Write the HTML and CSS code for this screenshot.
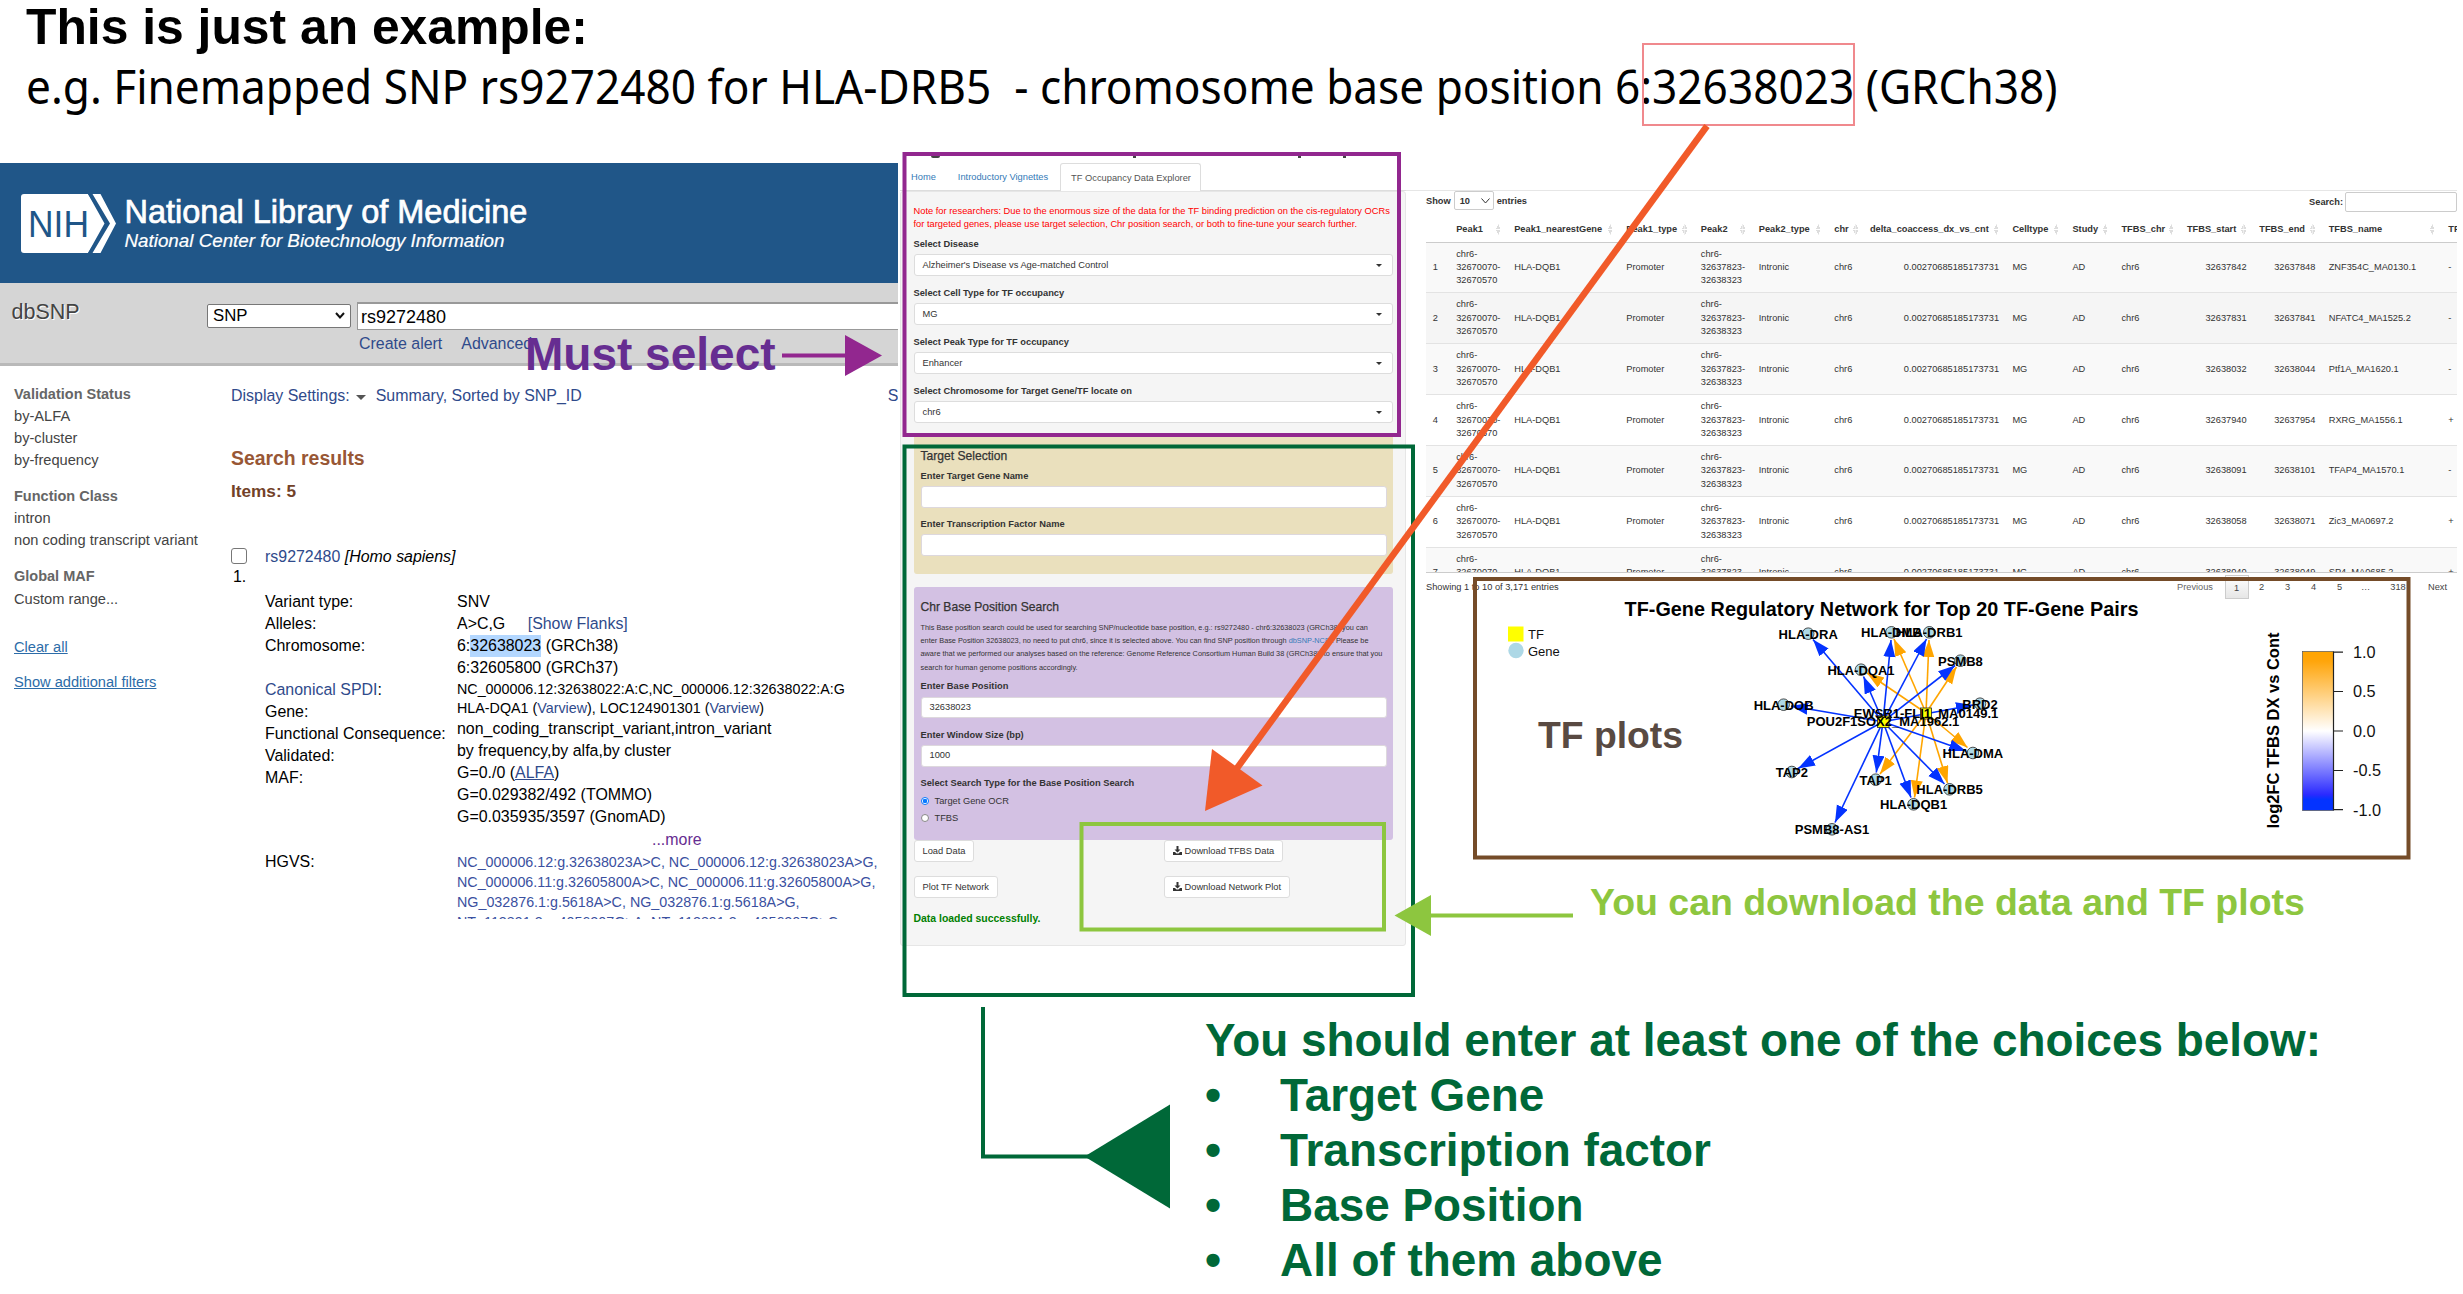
FILE: index.html
```html
<!DOCTYPE html>
<html lang="en">
<head>
<meta charset="utf-8">
<title>SNP base position search example</title>
<link rel="stylesheet" href="styles.css">
</head>
<body>
<div class="poster">
  <header class="intro">
    <h1>This is just an example:</h1>
    <p><span class="intro-text">e.g. Finemapped SNP rs9272480 for HLA-DRB5&nbsp; - chromosome base position 6:32638023 (GRCh38)</span></p>
  </header>

  <main class="panels">
    <section class="dbsnp">
      <div class="nlm">
        <svg class="nih" width="95" height="59" viewBox="0 0 95 59">
          <path d="M3 0H67L86 29.500 67 59H3Q0 59 0 56V3Q0 0 3 0Z" fill="#fff"/>
          <path d="M70 0H79.500L95 29.500 79.500 59H70L87 29.500Z" fill="#fff"/>
          <path d="M67 0H71.500L89 29.500 71.500 59H67L83.500 29.500Z" fill="#205688"/>
          <text x="7" y="43" font-size="37" textLength="61" lengthAdjust="spacingAndGlyphs" fill="#205688">NIH</text>
        </svg>
        <div class="nlm-names">
          <div class="nlm-title">National Library of Medicine</div>
          <div class="nlm-sub">National Center for Biotechnology Information</div>
        </div>
      </div>
      <div class="searchbar">
        <div class="db">dbSNP</div>
        <div class="fields">
          <div class="field-row">
            <div class="db-select">SNP<svg width="10" height="7" viewBox="0 0 10 7"><path d="M1 1L5 5.500 9 1" fill="none" stroke="#111" stroke-width="2"/></svg></div>
            <div class="term">rs9272480</div>
          </div>
          <div class="field-links"><a>Create alert</a><a>Advanced</a></div>
        </div>
      </div>
      <div class="dbsnp-body">
        <aside class="filters">
          <h3>Validation Status</h3>
          <div>by-ALFA</div><div>by-cluster</div><div>by-frequency</div>
          <h3>Function Class</h3>
          <div>intron</div><div>non coding transcript variant</div>
          <h3>Global MAF</h3>
          <div>Custom range...</div>
          <div class="flink first"><a>Clear all</a></div>
          <div class="flink"><a>Show additional filters</a></div>
        </aside>
        <div class="results">
          <div class="display"><span>Display Settings:</span><i class="tri"></i><span>Summary, Sorted by SNP_ID</span><span class="send">Send to:</span></div>
          <h2>Search results</h2>
          <h4>Items: 5</h4>
          <div class="record">
            <div class="pick"><i class="box"></i><span>1.</span></div>
            <div class="rec-body">
              <div class="rec-title"><a>rs9272480</a> <em>[Homo sapiens]</em></div>
              <div class="cols">
                <div class="labels">
                  <div>Variant type:</div><div>Alleles:</div><div>Chromosome:</div><div>&nbsp;</div>
                  <div><a>Canonical SPDI</a>:</div><div>Gene:</div><div>Functional Consequence:</div><div>Validated:</div><div>MAF:</div>
                  <div class="hgvs-label">HGVS:</div>
                </div>
                <div class="values">
                  <div>SNV</div>
                  <div>A&gt;C,G <a class="flanks">[Show Flanks]</a></div>
                  <div>6:<mark>32638023</mark> (GRCh38)</div>
                  <div>6:32605800 (GRCh37)</div>
                  <div class="sm">NC_000006.12:32638022:A:C,NC_000006.12:32638022:A:G</div>
                  <div class="sm gene">HLA-DQA1 (<a>Varview</a>), LOC124901301 (<a>Varview</a>)</div>
                  <div>non_coding_transcript_variant,intron_variant</div>
                  <div>by frequency,by alfa,by cluster</div>
                  <div>G=0./0 (<a class="u">ALFA</a>)</div>
                  <div>G=0.029382/492 (TOMMO)</div>
                  <div>G=0.035935/3597 (GnomAD)</div>
                  <div class="more">...more</div>
                  <div class="sm link">NC_000006.12:g.32638023A&gt;C, NC_000006.12:g.32638023A&gt;G,</div>
                  <div class="sm link">NC_000006.11:g.32605800A&gt;C, NC_000006.11:g.32605800A&gt;G,</div>
                  <div class="sm link">NG_032876.1:g.5618A&gt;C, NG_032876.1:g.5618A&gt;G,</div>
                  <div class="sm link">NT_113891.3:g.4056207G&gt;A, NT_113891.3:g.4056207G&gt;C,</div>
                </div>
              </div>
            </div>
          </div>
        </div>
      </div>
    </section>

    <section class="explorer">
      <div class="crop-edge"><i></i><i></i><i></i><i></i></div>
      <nav class="tabs"><a>Home</a><a>Introductory Vignettes</a><span>TF Occupancy Data Explorer</span></nav>
      <div class="well">
        <p class="note">Note for researchers: Due to the enormous size of the data for the TF binding prediction on the cis-regulatory OCRs<br>for targeted genes, please use target selection, Chr position search, or both to fine-tune your search further.</p>
        <label>Select Disease</label><div class="select">Alzheimer's Disease vs Age-matched Control</div>
        <label>Select Cell Type for TF occupancy</label><div class="select">MG</div>
        <label>Select Peak Type for TF occupancy</label><div class="select">Enhancer</div>
        <label>Select Chromosome for Target Gene/TF locate on</label><div class="select">chr6</div>
        <div class="target">
          <h5>Target Selection</h5>
          <label>Enter Target Gene Name</label><div class="input"></div>
          <label>Enter Transcription Factor Name</label><div class="input"></div>
        </div>
        <div class="position">
          <h5>Chr Base Position Search</h5>
          <p>This Base position search could be used for searching SNP/nucleotide base position, e.g.: rs9272480 - chr6:32638023 (GRCh38) you can<br>enter Base Position 32638023, no need to put chr6, since it is selected above. You can find SNP position through <a>dbSNP-NCBI</a>. Please be<br>aware that we performed our analyses based on the reference: Genome Reference Consortium Human Build 38 (GRCh38), to ensure that you<br>search for human genome positions accordingly.</p>
          <label>Enter Base Position</label><div class="input">32638023</div>
          <label>Enter Window Size (bp)</label><div class="input">1000</div>
          <label>Select Search Type for the Base Position Search</label>
          <div class="radios">
            <div class="radio"><i class="on"></i>Target Gene OCR</div>
            <div class="radio"><i></i>TFBS</div>
          </div>
        </div>
        <div class="buttons">
          <div><span class="btn">Load Data</span></div>
          <div><span class="btn"><svg width="9" height="9" viewBox="0 0 18 18"><path d="M7 0h4v7h4l-6 6-6-6h4z M0 12h4l3 3h4l3-3h4v6H0z"/></svg>Download TFBS Data</span></div>
          <div><span class="btn">Plot TF Network</span></div>
          <div><span class="btn"><svg width="9" height="9" viewBox="0 0 18 18"><path d="M7 0h4v7h4l-6 6-6-6h4z M0 12h4l3 3h4l3-3h4v6H0z"/></svg>Download Network Plot</span></div>
        </div>
        <div class="done">Data loaded successfully.</div>
      </div>
    </section>

    <section class="output">
      <div class="table-top">
        <div class="show">Show <span class="len">10<svg width="9" height="6" viewBox="0 0 9 6"><path d="M.5 .5L4.500 5 8.500 .5" fill="none" stroke="#333"/></svg></span> entries</div>
        <div class="find">Search:<span></span></div>
      </div>
      <div class="scroll">
        <table>
          <colgroup><col style="width:23.5px"><col style="width:58px"><col style="width:112px"><col style="width:74.500px"><col style="width:58px"><col style="width:75.500px"><col style="width:37.500px"><col style="width:140.500px"><col style="width:60px"><col style="width:49px"><col style="width:66px"><col style="width:72.500px"><col style="width:68.700px"><col style="width:119.600px"><col style="width:15.200px"></colgroup>
          <thead><tr><th class="n"></th><th>Peak1</th><th>Peak1_nearestGene</th><th>Peak1_type</th><th>Peak2</th><th>Peak2_type</th><th>chr</th><th class="r">delta_coaccess_dx_vs_cnt</th><th>Celltype</th><th>Study</th><th>TFBS_chr</th><th class="r">TFBS_start</th><th class="r">TFBS_end</th><th>TFBS_name</th><th class="cut">TFBS_strand</th></tr></thead>
          <tbody>
            <tr class="odd"><td>1</td><td>chr6-<br>32670070-<br>32670570</td><td>HLA-DQB1</td><td>Promoter</td><td>chr6-<br>32637823-<br>32638323</td><td>Intronic</td><td>chr6</td><td class="r">0.00270685185173731</td><td>MG</td><td>AD</td><td>chr6</td><td class="r">32637842</td><td class="r">32637848</td><td>ZNF354C_MA0130.1</td><td>-</td></tr>
            <tr class="hover"><td>2</td><td>chr6-<br>32670070-<br>32670570</td><td>HLA-DQB1</td><td>Promoter</td><td>chr6-<br>32637823-<br>32638323</td><td>Intronic</td><td>chr6</td><td class="r">0.00270685185173731</td><td>MG</td><td>AD</td><td>chr6</td><td class="r">32637831</td><td class="r">32637841</td><td>NFATC4_MA1525.2</td><td>-</td></tr>
            <tr class="odd"><td>3</td><td>chr6-<br>32670070-<br>32670570</td><td>HLA-DQB1</td><td>Promoter</td><td>chr6-<br>32637823-<br>32638323</td><td>Intronic</td><td>chr6</td><td class="r">0.00270685185173731</td><td>MG</td><td>AD</td><td>chr6</td><td class="r">32638032</td><td class="r">32638044</td><td>Ptf1A_MA1620.1</td><td>-</td></tr>
            <tr><td>4</td><td>chr6-<br>32670070-<br>32670570</td><td>HLA-DQB1</td><td>Promoter</td><td>chr6-<br>32637823-<br>32638323</td><td>Intronic</td><td>chr6</td><td class="r">0.00270685185173731</td><td>MG</td><td>AD</td><td>chr6</td><td class="r">32637940</td><td class="r">32637954</td><td>RXRG_MA1556.1</td><td>+</td></tr>
            <tr class="odd"><td>5</td><td>chr6-<br>32670070-<br>32670570</td><td>HLA-DQB1</td><td>Promoter</td><td>chr6-<br>32637823-<br>32638323</td><td>Intronic</td><td>chr6</td><td class="r">0.00270685185173731</td><td>MG</td><td>AD</td><td>chr6</td><td class="r">32638091</td><td class="r">32638101</td><td>TFAP4_MA1570.1</td><td>-</td></tr>
            <tr><td>6</td><td>chr6-<br>32670070-<br>32670570</td><td>HLA-DQB1</td><td>Promoter</td><td>chr6-<br>32637823-<br>32638323</td><td>Intronic</td><td>chr6</td><td class="r">0.00270685185173731</td><td>MG</td><td>AD</td><td>chr6</td><td class="r">32638058</td><td class="r">32638071</td><td>Zic3_MA0697.2</td><td>+</td></tr>
            <tr class="odd"><td>7</td><td>chr6-<br>32670070-<br>32670570</td><td>HLA-DQB1</td><td>Promoter</td><td>chr6-<br>32637823-<br>32638323</td><td>Intronic</td><td>chr6</td><td class="r">0.00270685185173731</td><td>MG</td><td>AD</td><td>chr6</td><td class="r">32638040</td><td class="r">32638049</td><td>SP4_MA0685.2</td><td>+</td></tr>
          </tbody>
        </table>
      </div>
      <div class="table-foot">
        <div class="info">Showing 1 to 10 of 3,171 entries</div>
        <div class="pages"><span class="prev">Previous</span><b>1</b><span>2</span><span>3</span><span>4</span><span>5</span><span>…</span><span class="last">318</span><span class="next">Next</span></div>
      </div>
      <svg class="plot" width="980" height="260" viewBox="1473 600 980 260">
        <defs>
          <marker id="hb" markerUnits="userSpaceOnUse" markerWidth="18" markerHeight="14" refX="17" refY="6" orient="auto"><path d="M0 0L17 6 0 12Z" fill="#0433ff"/></marker>
          <marker id="ho" markerUnits="userSpaceOnUse" markerWidth="18" markerHeight="14" refX="17" refY="6" orient="auto"><path d="M0 0L17 6 0 12Z" fill="#ffa500"/></marker>
          <linearGradient id="fc" x1="0" y1="0" x2="0" y2="1"><stop offset="0" stop-color="#ffa500"/><stop offset=".06" stop-color="#ffa50a"/><stop offset=".5" stop-color="#fff"/><stop offset=".9" stop-color="#2a2aff"/><stop offset=".93" stop-color="#0433ff"/><stop offset="1" stop-color="#0433ff"/></linearGradient>
        </defs>
        <text class="ptitle" x="1624.500" y="616" textLength="514">TF-Gene Regulatory Network for Top 20 TF-Gene Pairs</text>
        <rect x="1508" y="626.500" width="15.500" height="15" fill="#ff0"/>
        <circle cx="1516" cy="650.500" r="7.700" fill="#add8e6"/>
        <text class="leg" x="1528" y="639">TF</text><text class="leg" x="1528" y="655.500">Gene</text>
        <g class="orange">
          <path d="M1926 713L1894 639"/><path d="M1926 713L1929 640"/><path d="M1926 713L1867 673"/><path d="M1926 713L1956.500 667"/>
          <path d="M1926 713L1967.500 747.500"/><path d="M1926 713L1947.500 783"/><path d="M1926 713L1914.500 797.500"/><path d="M1926 713L1880 774"/>
        </g>
        <g class="blue">
          <path d="M1883 721.700L1813 639.500"/><path d="M1883 721.700L1891 640"/><path d="M1883 721.700L1926.500 639"/><path d="M1883 721.700L1863.500 676.500"/>
          <path d="M1883 721.700L1955 665.500"/><path d="M1883 721.700L1791 706"/><path d="M1883 721.700L1973 705"/><path d="M1883 721.700L1966 751"/>
          <path d="M1883 721.700L1944.500 784"/><path d="M1883 721.700L1911 797.500"/><path d="M1883 721.700L1876.300 772.500"/><path d="M1883 721.700L1798 768.500"/><path d="M1883 721.700L1835 822.500"/>
        </g>
        <g class="nodes">
          <circle cx="1808.200" cy="633.700" r="5.800"/><circle cx="1891.400" cy="632.300" r="5.800"/><circle cx="1929.300" cy="632.300" r="5.800"/><circle cx="1861" cy="669.700" r="5.800"/><circle cx="1960.400" cy="660.700" r="5.800"/><circle cx="1783.600" cy="704.700" r="5.800"/><circle cx="1980" cy="703.700" r="5.800"/><circle cx="1791.800" cy="772" r="5.800"/><circle cx="1875.700" cy="779.700" r="5.800"/><circle cx="1972.900" cy="753" r="5.800"/><circle cx="1949.600" cy="789.300" r="5.800"/><circle cx="1913.600" cy="804.300" r="5.800"/><circle cx="1832" cy="829.300" r="5.800"/>
        </g>
        <rect class="tf" x="1920.500" y="708" width="11" height="11"/><rect class="tf" x="1877.500" y="716" width="11.500" height="11.500"/>
        <g class="names">
          <text x="1808.200" y="638.700">HLA-DRA</text><text x="1891.400" y="637">HLA-DMB</text><text x="1929.300" y="637">HLA-DRB1</text><text x="1861" y="674.500">HLA-DQA1</text><text x="1960.400" y="665.700">PSMB8</text><text x="1783.600" y="709.500">HLA-DOB</text><text x="1980" y="708.500">BRD2</text><text x="1926" y="718.300">EWSR1-FLI1_MA0149.1</text><text x="1883" y="726">POU2F1SOX2_MA1962.1</text><text x="1791.800" y="777">TAP2</text><text x="1875.700" y="784.700">TAP1</text><text x="1972.900" y="758">HLA-DMA</text><text x="1949.600" y="794">HLA-DRB5</text><text x="1913.600" y="809.300">HLA-DQB1</text><text x="1832" y="834.300">PSMB8-AS1</text>
        </g>
        <rect x="2302.500" y="651.500" width="31" height="159" fill="url(#fc)" stroke="#555" stroke-width=".7"/>
        <path d="M2333.500 651.500V810.500M2333.500 652.200H2343M2333.500 691.500H2343M2333.500 731H2343M2333.500 770.500H2343M2333.500 809.700H2343" stroke="#222" stroke-width="1.200"/>
        <g class="ticks"><text x="2353" y="658">1.0</text><text x="2353" y="697.300">0.5</text><text x="2353" y="736.800">0.0</text><text x="2353" y="776.300">-0.5</text><text x="2353" y="815.700">-1.0</text></g>
        <text class="axis" transform="translate(2279 828.500) rotate(-90)" textLength="196">log2FC TFBS DX vs Cont</text>
      </svg>
    </section>
  </main>

  <div class="tag must">Must select</div>
  <div class="tag plots">TF plots</div>
  <div class="tag download">You can download the data and TF plots</div>
  <div class="choices">
    <p>You should enter at least one of the choices below:</p>
    <ul><li>Target Gene</li><li>Transcription factor</li><li>Base Position</li><li>All of them above</li></ul>
  </div>
  <svg class="marks" width="2463" height="1294" viewBox="0 0 2463 1294">
    <g fill="none">
      <rect x="1643" y="44" width="211" height="81" stroke="#f0898d" stroke-width="2"/>
      <rect x="904.500" y="154" width="494.500" height="281" stroke="#92278f" stroke-width="4"/>
      <rect x="904.500" y="446.500" width="508.500" height="548.500" stroke="#006838" stroke-width="4"/>
      <rect x="1475" y="579" width="933.500" height="278.500" stroke="#754c29" stroke-width="4"/>
      <path d="M1707 126L1232 775" stroke="#f15a29" stroke-width="6.500"/>
      <rect x="1081.500" y="824" width="302.500" height="105.500" stroke="#8dc63f" stroke-width="4"/>
      <path d="M782 355.500H850" stroke="#92278f" stroke-width="4"/>
      <path d="M1428 915.500H1573" stroke="#8dc63f" stroke-width="4"/>
      <path d="M983 1007V1156.500H1092" stroke="#006838" stroke-width="4"/>
    </g>
    <path d="M845 335L882 355.500 845 376Z" fill="#92278f"/>
    <path d="M1205 811L1212 749 1262.500 785.500Z" fill="#f15a29"/>
    <path d="M1394.500 915.500L1431 895V936Z" fill="#8dc63f"/>
    <path d="M1084.500 1156.500L1170 1104.500V1208.500Z" fill="#006838"/>
  </svg>
</div>
</body>
</html>
```
FILE: styles.css
```css
* { box-sizing: border-box; }
body { margin: 0; background: #fff; font-family: "Liberation Sans", Arial, sans-serif; }
h1, h2, h3, h4, h5, p, ul { margin: 0; padding: 0; }
.poster { position: relative; width: 2463px; height: 1294px; overflow: hidden; }

.intro { height: 150px; padding: 1.5px 0 0 26px; color: #000; }
.intro h1 { font-size: 49.8px; line-height: 50px; }
.intro p { font: 47.5px/60px "Noto Sans", sans-serif; margin-top: 4px; white-space: nowrap; }
.intro-text { display: inline-block; transform-origin: 0 50%; transform: scaleX(.93); }

.panels { display: flex; height: 850px; }

/* dbSNP page */
.dbsnp { width: 898px; height: 755.5px; margin-top: 13px; overflow: hidden; font-size: 15.95px; line-height: 22px; color: #000; flex: none; white-space: nowrap; }
.dbsnp a, .link { color: #2f4a8b; }
.nlm { height: 120px; background: #205688; display: flex; padding: 31px 0 0 21px; color: #fff; }
.nih { flex: none; }
.nlm-names { margin-left: 8.5px; }
.nlm-title { font-size: 32.5px; line-height: 36px; -webkit-text-stroke: .7px #fff; }
.nlm-sub { font-size: 18.8px; line-height: 20px; font-style: italic; margin-top: 1px; -webkit-text-stroke: .2px #fff; }
.searchbar { height: 83px; background: #d5d5d5; border-bottom: 3px solid #b9b9b9; display: flex; padding-left: 11.5px; }
.db { width: 195.5px; padding-top: 17.5px; font-size: 21.5px; color: #444; text-shadow: 1px 1px 0 #fff; }
.fields { flex: 1; padding-top: 19px; }
.field-row { display: flex; gap: 6px; align-items: center; }
.db-select { width: 144px; height: 24px; background: #fff; border: 1px solid #777; border-radius: 2px; display: flex; align-items: center; justify-content: space-between; padding: 0 5px 0 5px; font-size: 16.8px; }
.term { flex: 1; height: 27.5px; background: #fff; border: 1px solid #999; border-top-width: 2px; border-right: 0; padding: 2px 0 0 3px; font-size: 18px; }
.field-links { display: flex; gap: 19px; padding-left: 152px; margin-top: 3.5px; }
.dbsnp-body { display: flex; }
.filters { width: 231px; flex: none; padding: 17.5px 0 0 14px; font-size: 14.65px; line-height: 21.8px; color: #444; }
.filters h3 { font-size: 14.5px; color: #666; margin-bottom: 1px; }
.filters h3:not(:first-child) { margin-top: 14px; }
.filters .flink { margin-top: 14px; }
.filters .first { margin-top: 26px; }
.filters a { color: #2c6ca8; text-decoration: underline; }
.results { flex: none; width: 667px; padding-top: 19px; }
.display { display: flex; color: #2f4a8b; }
.tri { width: 0; height: 0; border: 5px solid transparent; border-top: 5px solid #555; border-bottom: 0; margin: 10px 10px 0 6px; }
.send { margin-left: 306px; }
.results h2 { font-size: 19.4px; line-height: 22px; color: #985735; margin-top: 40px; }
.results h4 { font-size: 17.2px; line-height: 22px; color: #724128; margin-top: 10.5px; }
.record { display: flex; margin-top: 44.9px; }
.pick { width: 34px; }
.pick span { display: block; padding-left: 2px; margin-top: 2px; }
.box { display: block; width: 16px; height: 16px; border: 1px solid #777; border-radius: 3px; margin: 2px 0 0 0; }
.cols { display: flex; margin-top: 23px; }
.labels { width: 192px; }
.hgvs-label { margin-top: 62px; }
.sm { font-size: 14.3px; line-height: 20px; }
.gene { line-height: 19px; }
.flanks { margin-left: 18px; }
mark { background: #b3d7ff; display: inline-block; color: #000; }
.u { text-decoration: underline; }
.more { padding: 1px 0 0 195px; height: 23.5px; color: #662d91; }
.link { color: #3a50a0; }

/* Explorer form */
.explorer { width: 506px; margin-left: 2px; font-size: 9.3px; color: #333; flex: none; white-space: nowrap; }
.crop-edge { height: 13px; padding: 6px 0 0 31px; display: flex; }
.crop-edge i { width: 3px; height: 2px; background: #444; }
.crop-edge i:first-child { width: 9px; margin-right: 193px; border-radius: 0 0 4px 4px; }
.crop-edge i:nth-child(2) { margin-right: 162px; }
.crop-edge i:nth-child(3) { margin-right: 42px; }
.tabs { height: 28px; display: flex; padding-left: 11px; line-height: 29px; border-bottom: 1px solid #ddd; }
.tabs a { color: #337ab7; margin-right: 22px; }
.tabs span { margin-left: -10px; padding: 0 9.5px 0 10px; border: 1px solid #ddd; border-bottom: 0; background: #fff; border-radius: 3px 3px 0 0; height: 28px; line-height: 28px; color: #555; }
.well { height: 755px; background: #f5f5f5; border: 1px solid #e6e6e6; border-radius: 3px; padding: 13.2px 12px 0 12.5px; }
.note { color: #f00; line-height: 13.3px; letter-spacing: .01px; }
.explorer label { display: block; font-weight: bold; line-height: 13px; margin: 10.5px 0 3px; }
.note + label { margin-top: 6px; }
.select, .input { height: 22.5px; line-height: 20.5px; background: #fff; border: 1px solid #ddd; border-radius: 3px; padding-left: 8px; display: flex; justify-content: space-between; }
.select::after { content: ""; border: 3px solid transparent; border-top-color: #333; border-bottom: 0; margin: 9px 10.5px 0 0; height: 0; }
.input { height: 21.5px; line-height: 19.5px; border-color: #ddd8dd; }
.target, .position { border-radius: 3px; padding: 16.2px 6.5px 0 7px; }
.target { height: 140.5px; margin-top: 10px; background: #eae0bd; }
.explorer h5 { font-size: 12.1px; line-height: 14px; font-weight: normal; -webkit-text-stroke: .25px #333; }
.target h5 + label { margin-top: 7px; }
.position { height: 253px; margin-top: 13.2px; background: #d3c1e3; padding-top: 12.8px; }
.position p { font-size: 7.33px; line-height: 13.35px; margin-top: 6.8px; }
.position p a { color: #337ab7; }
.position label { margin-bottom: 3.8px; }
.position p + label { margin-top: 5.8px; }
.radio { display: flex; align-items: center; height: 16.5px; gap: 6px; }
.radios { margin-top: -1px; }
.radio i { width: 8px; height: 8px; margin-left: 0; border: 1px solid #888; border-radius: 50%; background: #fff; }
.radio .on { border: 1px solid #0a7aff; background: radial-gradient(circle, #0a7aff 0 2px, #fff 2.5px); }
.buttons { display: grid; grid-template-columns: 250px 1fr; row-gap: 14px; }
.btn { display: inline-flex; align-items: center; height: 22px; padding: 0 8px; background: #fff; border: 1px solid #ddd; border-radius: 3px; vertical-align: top; }
.btn svg { margin-right: 3px; fill: #333; }
.done { margin-top: 14.2px; font-size: 10.45px; line-height: 14px; font-weight: bold; color: #008000; }

/* Result table and network plot */
.output { flex: none; width: 1050.5px; padding: 0 0 0 20px; margin-top: 40px; font-size: 9.25px; color: #333; border-top: 1px solid #e6e6e6; height: 700px; white-space: nowrap; }
.table-top { display: flex; justify-content: space-between; height: 29.6px; font-weight: bold; }
.show { display: flex; align-items: center; height: 19px; gap: 3px; }
.len { width: 40px; height: 18.5px; border: 1px solid #ccc; border-radius: 2px; display: flex; align-items: center; justify-content: space-between; padding: 0 3px 0 5px; }
.find { display: flex; align-items: center; height: 22px; gap: 2px; }
.find span { width: 111.5px; height: 20px; border: 1px solid #ccc; border-radius: 2px; }
.scroll { height: 352.5px; overflow: hidden; border-bottom: 1px solid #ccc; }
table { width: 1031px; table-layout: fixed; border-collapse: separate; border-spacing: 0; line-height: 13.3px; }
th { height: 22px; padding: 0 0 3px 6.7px; text-align: left; border-bottom: 1px solid #ccc; }
th { background: linear-gradient(to bottom right, transparent 50%, #ddd 51%) no-repeat right 9.5px top 3px / 2.5px 5px, linear-gradient(to bottom left, transparent 50%, #ddd 51%) no-repeat right 7px top 3px / 2.5px 5px, linear-gradient(to top right, transparent 50%, #ddd 51%) no-repeat right 9.5px top 9px / 2.5px 5px, linear-gradient(to top left, transparent 50%, #ddd 51%) no-repeat right 7px top 9px / 2.5px 5px; }
th.n, th.cut { background: none; overflow: hidden; }
th.r { text-align: right; padding-right: 17px; padding-left: 0; }
td { height: 50.9px; padding: 0 0 0 6.7px; vertical-align: middle; border-bottom: 1px solid #e3e3e3; }
td.r { text-align: right; padding: 0 6.7px 0 0; }
.odd td { background: #f9f9f9; }
.hover td { background: #f5f5f5; }
.table-foot { display: flex; justify-content: space-between; height: 27px; padding-top: 2px; }
.info { line-height: 24.5px; }
.pages { display: flex; width: 279.5px; height: 24px; color: #444; text-align: center; line-height: 25px; }
.pages span { width: 26px; flex: none; }
.pages .prev { width: 47.5px; text-align: left; color: #666; }
.pages b { width: 24px; flex: none; font-weight: normal; border: 1px solid #ccc; background: linear-gradient(#fff, #e6e6e6); line-height: 24px; }
.pages .last { width: 38px; padding-left: 1px; }
.pages .next { width: 30.5px; text-align: right; }
.plot { display: block; margin-left: 47px; }
.ptitle { font-weight: bold; font-size: 19.8px; fill: #000; }
.leg { font-size: 13px; fill: #111; }
.orange path { stroke: #ffa500; stroke-width: 1.6; marker-end: url(#ho); }
.blue path { stroke: #0433ff; stroke-width: 1.6; marker-end: url(#hb); }
.nodes circle { fill: #add8e6; stroke: #222; stroke-width: .8; }
.tf { fill: #ff0; stroke: #222; stroke-width: .8; }
.names { font-weight: bold; font-size: 13px; text-anchor: middle; fill: #000; }
.ticks { font-size: 16.3px; fill: #111; }
.axis { font-weight: bold; font-size: 16.5px; fill: #000; }

/* Annotations laid over the panels */
.marks { position: absolute; left: 0; top: 0; }
.tag { position: absolute; font-weight: bold; white-space: nowrap; }
.must { left: 525px; top: 328px; font-size: 46px; line-height: 52px; color: #662d91; }
.plots { left: 1538px; top: 715px; font-size: 37.3px; line-height: 40px; color: #594a42; }
.download { left: 1590px; top: 882px; font-size: 37.45px; line-height: 40px; color: #8dc63f; }
.choices { position: absolute; left: 1205px; top: 1013px; font-size: 45.9px; line-height: 55px; font-weight: bold; color: #006838; white-space: nowrap; }
.choices ul { list-style: none; }
.choices li { display: flex; }
.choices li::before { content: "•"; width: 75px; }
```
